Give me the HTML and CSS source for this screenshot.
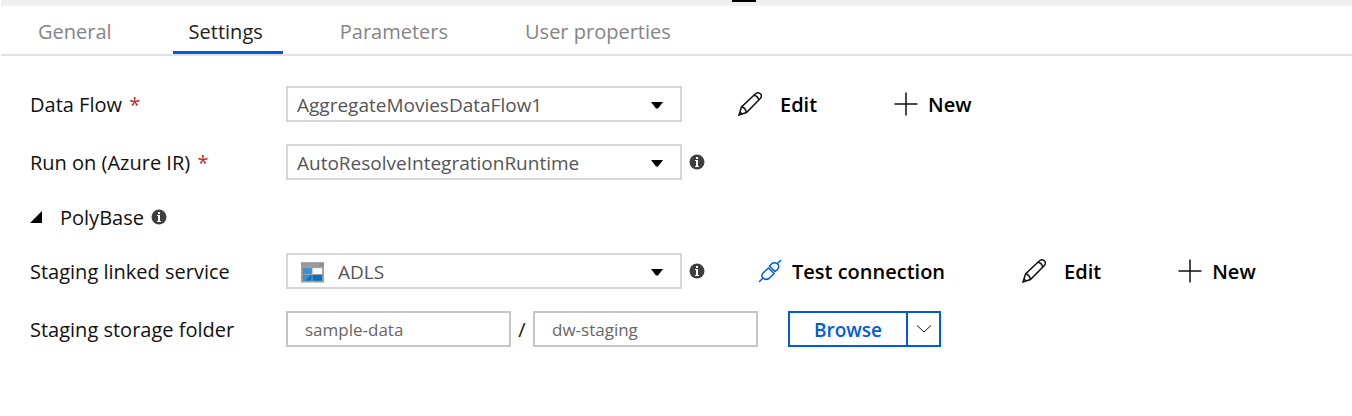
FILE: index.html
```html
<!DOCTYPE html>
<html lang="en">
<head>
<meta charset="utf-8">
<title>Data flow activity settings</title>
<link rel="stylesheet" href="styles.css">
</head>
<body>
<svg class="defs" aria-hidden="true">
  <symbol id="pencil" viewBox="0 0 24 24"><path d="M1 23l2.500-8L17.500 1.800Q20-.3 22.300 1.800T22.300 6.500L8.500 20.500zM3.500 15q4 .5 5 5.500M16 3.300q4 1 4.800 4.700M1 23l3-1-2-2z"/></symbol>
  <symbol id="plus" viewBox="0 0 24 24"><path d="M12 .5v23M.5 12h23"/></symbol>
  <symbol id="info" viewBox="0 0 16 16"><circle cx="8" cy="8" r="7.500" fill="#3f3f3f"/><path d="M7 3h2v2H7zM6 6h3v6h1v1H6v-1h1V7H6z" fill="#fff"/></symbol>
</svg>
<div class="splitter"><span class="grip"></span></div>
<nav class="tabs">
  <button class="tab">General</button>
  <button class="tab active">Settings</button>
  <button class="tab">Parameters</button>
  <button class="tab">User properties</button>
</nav>
<main class="form">
  <div class="row">
    <label class="label" for="flow">Data Flow <span class="required">*</span></label>
    <div class="picker">
      <select id="flow"><option>AggregateMoviesDataFlow1</option></select>
      <svg class="arrow" viewBox="0 0 12 7"><path d="M0 0h12L7 6.500H5z"/></svg>
    </div>
    <div class="actions">
      <button class="action edit"><svg class="icon"><use href="#pencil"/></svg><span class="text">Edit</span></button>
      <button class="action new"><svg class="icon"><use href="#plus"/></svg><span class="text">New</span></button>
    </div>
  </div>
  <div class="row">
    <label class="label" for="runtime">Run on (Azure IR) <span class="required">*</span></label>
    <div class="picker">
      <select id="runtime"><option>AutoResolveIntegrationRuntime</option></select>
      <svg class="arrow" viewBox="0 0 12 7"><path d="M0 0h12L7 6.500H5z"/></svg>
    </div>
    <svg class="info"><use href="#info"/></svg>
  </div>
  <div class="section">
    <button class="toggle" aria-expanded="true"><svg class="triangle" viewBox="0 0 12 12"><path d="M12 0v12H0z"/></svg><span class="text">PolyBase</span></button>
    <svg class="info"><use href="#info"/></svg>
  </div>
  <div class="row">
    <label class="label" for="service">Staging linked service</label>
    <div class="picker">
      <svg class="storage" viewBox="0 0 24 21"><path fill="#a0a0a0" d="M0 0h24v21H0z"/><path fill="#8c8c8c" d="M0 0h24v4H0z"/><path fill="#b0b0b0" d="M0 4h18l4-4H0z" opacity=".4"/><path fill="#0072c6" d="M2 6h9v6H2zM2 13h9v6H2zM12 13h10v6H12z"/><path fill="#fff" d="M12 6h10v6H12z"/><path fill="#68b0ea" d="M2 6h9v6H2zM2 13h8l-5 6H2z" opacity=".5"/></svg>
      <select id="service" class="with-icon"><option>ADLS</option></select>
      <svg class="arrow" viewBox="0 0 12 7"><path d="M0 0h12L7 6.500H5z"/></svg>
    </div>
    <svg class="info"><use href="#info"/></svg>
    <div class="actions after-info">
      <button class="action test"><svg class="icon plug" viewBox="0 0 24 24"><path d="M1 23l4-4M19 5l4-4M10.500 9L5.500 13.500Q2.500 16.500 5 19T11 19.500L16 14.500zM11.500 7L17 12.500L19.500 10.500Q22 7 19.500 5T14 4.500z"/></svg><span class="text">Test connection</span></button>
      <button class="action edit"><svg class="icon"><use href="#pencil"/></svg><span class="text">Edit</span></button>
      <button class="action new"><svg class="icon"><use href="#plus"/></svg><span class="text">New</span></button>
    </div>
  </div>
  <div class="row">
    <label class="label" for="container">Staging storage folder</label>
    <div class="path">
      <input id="container" value="sample-data">
      <span class="text">/</span>
      <input aria-label="Folder path" value="dw-staging">
    </div>
    <div class="split">
      <button class="browse">Browse</button>
      <button class="more" aria-label="More browse options"><svg class="chevron" viewBox="0 0 14 8"><path d="M0 .5l7 6.500L14 .5"/></svg></button>
    </div>
  </div>
</main>
</body>
</html>
```
FILE: styles.css
```css
* { box-sizing: border-box; }
body { margin: 0; background: #fff; color: #111; font: 20px/28px "Open Sans", "Noto Sans", sans-serif; }
button, select, input { font: inherit; color: inherit; margin: 0; padding: 0; border: 0; border-radius: 0; background: none; }
button { cursor: pointer; white-space: nowrap; }
svg { flex: none; display: block; }
.defs { position: absolute; width: 0; height: 0; }
.splitter { height: 6px; margin-left: 1px; background: #f0f0f0; display: flex; justify-content: center; }
.grip { width: 24px; height: 2px; margin-left: 135px; background: #000; }
.tabs { display: flex; gap: 41px; height: 50px; margin-left: 1px; padding-left: 21px; border-bottom: 2px solid #e2e2e2; }
.tab { padding: 7px 20px 0 16px; color: #858585; border-bottom: 3px solid transparent; }
.tab.active { color: #222; border-color: #015cda; }
.form { display: flex; flex-direction: column; gap: 22px; padding: 30px 30px; }
.row { display: flex; align-items: center; height: 36px; }
.label, .text { padding-top: 2px; }
.label { width: 256px; flex: none; white-space: nowrap; }
.required { color: #c4262e; margin-left: 2px; }
.picker { position: relative; width: 396px; }
.picker select { display: block; width: 100%; height: 36px; padding: 2px 0 0 9px; border: 2px solid #d6d6d6; appearance: none; color: #555; font-size: 19px; }
.picker select.with-icon { padding-left: 50px; }
.arrow { position: absolute; right: 19px; top: 16px; width: 12px; height: 7px; pointer-events: none; }
.storage { position: absolute; left: 15px; top: 9px; width: 23px; height: 21px; }
.info { width: 16px; height: 16px; margin-left: 7px; }
.section { display: flex; align-items: center; height: 29px; }
.toggle { display: flex; align-items: center; gap: 18px; }
.triangle { width: 12px; height: 12px; }
.actions { display: flex; gap: 77px; margin-left: 56px; }
.actions.after-info { margin-left: 53px; }
.action { display: flex; align-items: center; gap: 18px; color: #000; font-weight: 600; }
.action.new, .action.test { gap: 10px; }
.icon { width: 24px; height: 24px; fill: none; stroke: #111; stroke-width: 1.500; }
.icon.plug { stroke: #015cda; stroke-width: 1.500; }
.path { display: flex; align-items: center; justify-content: space-between; width: 472px; }
.path input { width: 225px; height: 36px; padding: 0 0 0 17px; border: 2px solid #c6c6c6; color: #666; font-size: 17px; }
.split { display: flex; height: 36px; margin-left: 30px; border: 2px solid #015cda; }
.browse { width: 116px; padding-top: 2px; color: #015cda; font-size: 19px; font-weight: 600; }
.more { width: 33px; border-left: 2px solid #015cda; display: grid; place-items: center; }
.chevron { width: 14px; height: 8px; fill: none; stroke: #111; }
```
